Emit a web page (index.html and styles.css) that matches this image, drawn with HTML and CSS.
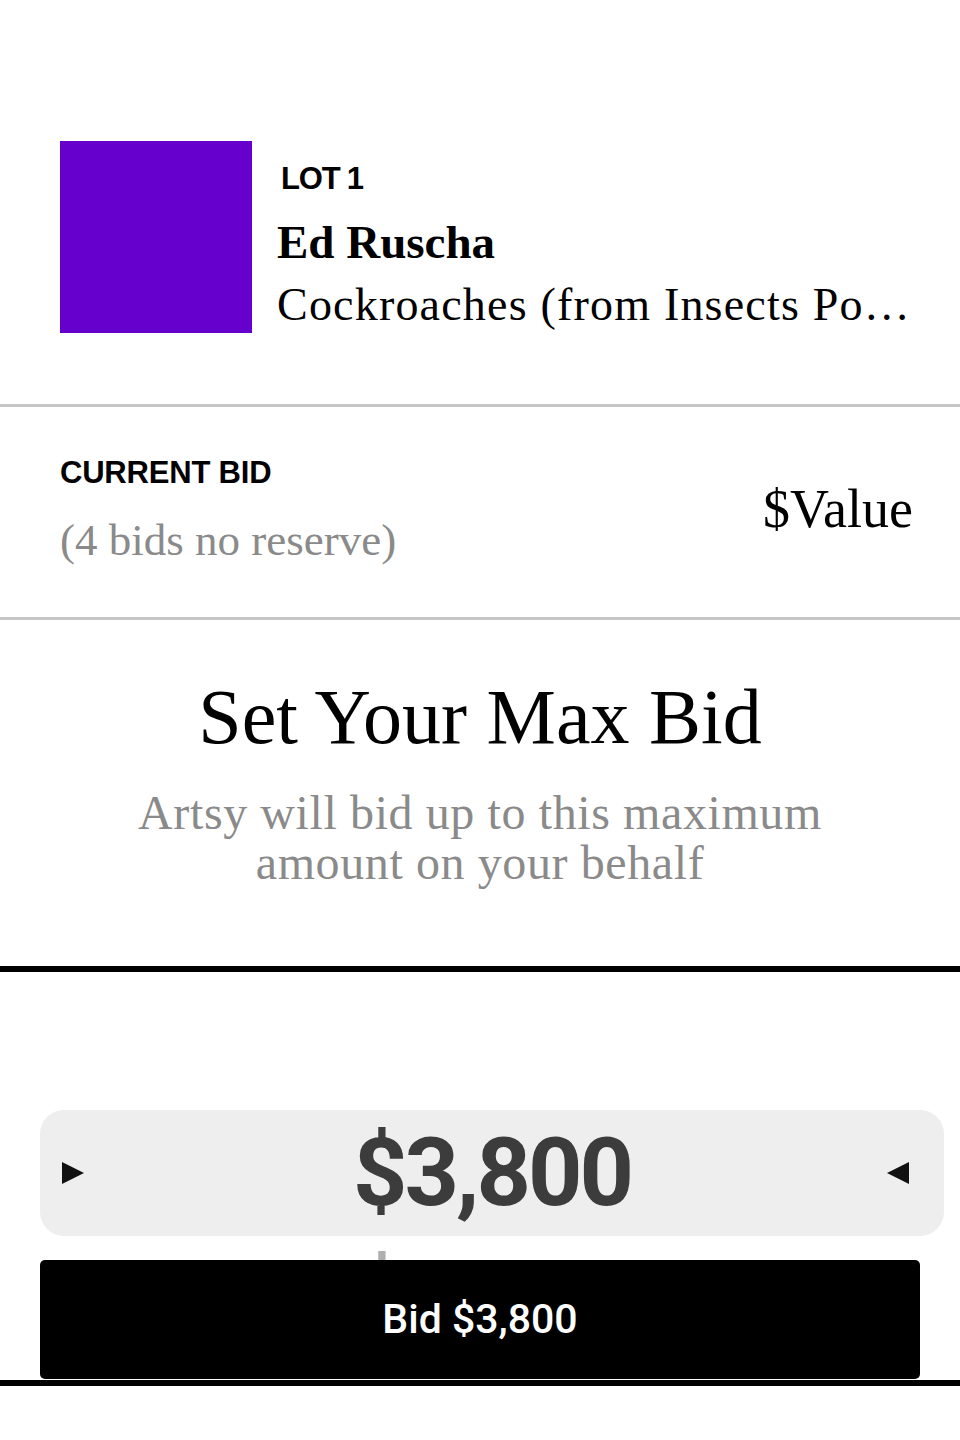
FILE: index.html
```html
<!DOCTYPE html>
<html lang="en">
<head>
<meta charset="utf-8">
<title>Set Your Max Bid</title>
<link rel="stylesheet" href="styles.css">
</head>
<body>
<main class="screen">
  <header class="lot">
    <div class="lot__thumb"></div>
    <div class="lot__info">
      <div class="lot__label">LOT 1</div>
      <div class="lot__artist">Ed Ruscha</div>
      <div class="lot__title">Cockroaches (from Insects Portfolio)</div>
    </div>
  </header>

  <section class="current">
    <div class="current__left">
      <div class="current__label">CURRENT BID</div>
      <div class="current__meta">(4 bids no reserve)</div>
    </div>
    <div class="current__value">$Value</div>
  </section>

  <section class="intro">
    <h1 class="intro__title">Set Your Max Bid</h1>
    <p class="intro__text">Artsy will bid up to this maximum amount on your behalf</p>
  </section>

  <section class="bid-area">
    <div class="wheel">
      <div class="wheel__selected">
        <svg class="wheel__arrow wheel__arrow--left" width="22" height="22" viewBox="0 0 22 22" aria-hidden="true"><polygon points="0,0 22,11 0,22"/></svg>
        <span class="wheel__value">$3,800</span>
        <svg class="wheel__arrow wheel__arrow--right" width="22" height="22" viewBox="0 0 22 22" aria-hidden="true"><polygon points="22,0 0,11 22,22"/></svg>
      </div>
      <div class="wheel__next">$3,900</div>
    </div>
    <div class="footer">
      <button class="bid-btn" type="button">Bid $3,800</button>
      <div class="footer__rule"></div>
    </div>
  </section>
</main>
</body>
</html>
```

FILE: styles.css
```css
* {
  box-sizing: border-box;
}

html, body {
  margin: 0;
  padding: 0;
  background: #ffffff;
}

.screen {
  width: 960px;
  font-family: "Liberation Serif", "Times New Roman", serif;
  color: #000;
}

/* ---------- Lot header ---------- */
.lot {
  display: flex;
  align-items: flex-start;
  gap: 25px;
  padding: 141px 48px 71px 60px;
}

.lot__thumb {
  flex: 0 0 192px;
  width: 192px;
  height: 192px;
  background: #6600cc;
}

.lot__info {
  flex: 1;
  min-width: 0;
  padding-top: 22px;
}

.lot__label {
  font-family: "Liberation Sans", Arial, sans-serif;
  font-weight: 700;
  font-size: 31px;
  line-height: 32px;
  letter-spacing: -1.2px;
  margin-left: 4px;
}

.lot__artist {
  margin-top: 19px;
  font-weight: 700;
  font-size: 47px;
  line-height: 56px;
}

.lot__title {
  margin-top: 7px;
  font-size: 46px;
  line-height: 56px;
  letter-spacing: 1.2px;
  white-space: nowrap;
  overflow: hidden;
  text-overflow: ellipsis;
}

/* ---------- Current bid ---------- */
.current {
  display: flex;
  justify-content: space-between;
  align-items: flex-start;
  height: 216px;
  padding: 50px 47px 0 60px;
  border-top: 3px solid #c6c6c6;
  border-bottom: 3px solid #c6c6c6;
}

.current__label {
  font-family: "Liberation Sans", Arial, sans-serif;
  font-weight: 700;
  font-size: 31px;
  line-height: 32px;
  letter-spacing: -0.2px;
}

.current__meta {
  margin-top: 26px;
  font-size: 45px;
  line-height: 50px;
  color: #8a8a8a;
}

.current__value {
  margin-top: 22px;
  font-size: 54px;
  line-height: 60px;
}

/* ---------- Intro ---------- */
.intro {
  padding: 54px 0 78px;
  border-bottom: 6px solid #000;
  text-align: center;
}

.intro__title {
  margin: 0;
  font-weight: 400;
  font-size: 78px;
  line-height: 86px;
}

.intro__text {
  max-width: 760px;
  margin: 28px auto 0;
  font-size: 48px;
  line-height: 50px;
  letter-spacing: 0.6px;
  color: #8a8a8a;
}

/* ---------- Bid picker ---------- */
.bid-area {
  position: relative;
  height: 414px;
  overflow: hidden;
}

.wheel {
  padding-top: 138px;
  font-family: Roboto, "Liberation Sans", Arial, sans-serif;
  font-weight: 700;
  font-size: 95px;
  letter-spacing: -3px;
}

.wheel__selected {
  display: grid;
  grid-template-columns: 1fr auto 1fr;
  align-items: center;
  height: 126px;
  margin: 0 16px 0 40px;
  border-radius: 24px;
  background: #eeeeee;
  line-height: 126px;
}

.wheel__arrow {
  display: block;
  fill: #111111;
}

.wheel__arrow--left {
  justify-self: start;
  margin-left: 22px;
}

.wheel__arrow--right {
  justify-self: end;
  margin-right: 35px;
}

.wheel__value {
  color: #3c3c3c;
}

.wheel__next {
  margin: 0 16px 0 40px;
  line-height: 122px;
  text-align: center;
  color: #b0b0b0;
}

.footer {
  position: absolute;
  left: 0;
  right: 0;
  bottom: 0;
}

.bid-btn {
  display: block;
  width: 880px;
  height: 119px;
  margin: 0 0 1px 40px;
  padding: 0;
  border: none;
  border-radius: 5px;
  background: #000;
  color: #fff;
  font-family: Roboto, "Liberation Sans", Arial, sans-serif;
  font-weight: 500;
  font-size: 41px;
  line-height: 119px;
  text-align: center;
}

.footer__rule {
  height: 6px;
  background: #000;
}
```
